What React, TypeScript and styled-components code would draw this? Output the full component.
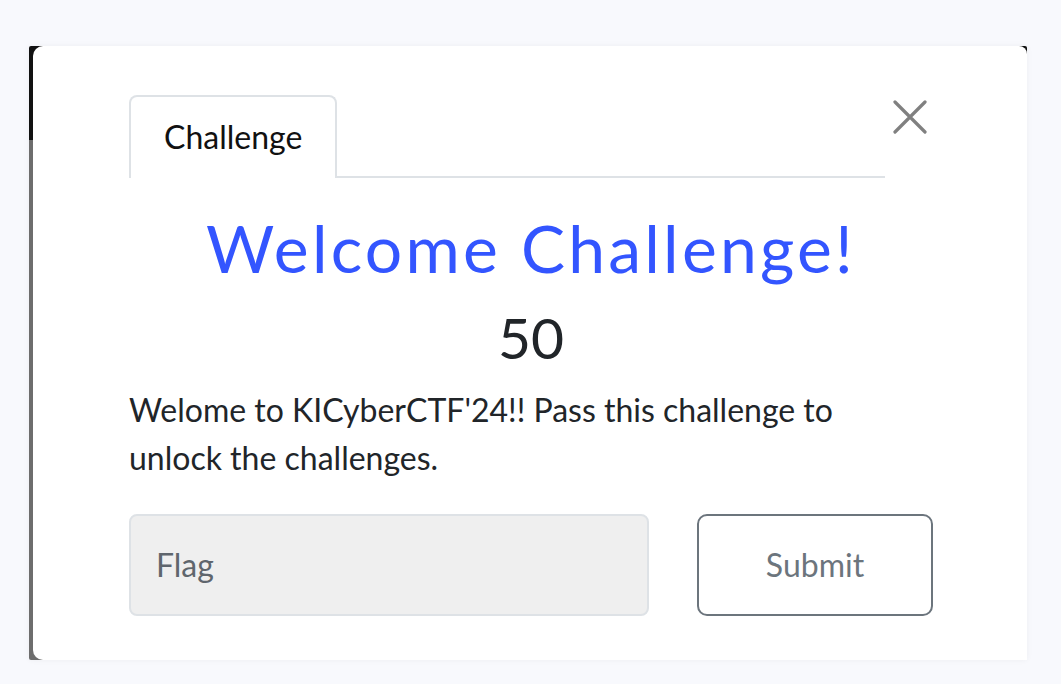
import React from "react";
import styled, { createGlobalStyle } from "styled-components";

const Global = createGlobalStyle`
  html, body { margin: 0; padding: 0; background: #f8f9fd; }
  body { font-family: Lato, "Open Sans", sans-serif; color: #212529; }
  * { box-sizing: border-box; }
`;

const Page = styled.div`
  padding: 46px 34px 24px 29px;
`;

const Backdrop = styled.div`
  background: linear-gradient(#111 0, #111 94px, #6d6d6d 94px, #6d6d6d 100%);
  border-radius: 2px;
  box-shadow: 0 0 6px rgba(0, 0, 0, 0.05);
  padding-left: 4px;
`;

const Card = styled.div`
  background: #fff;
  border-radius: 10px 8px 0 10px;
  padding: 49px 94px 44px 96px;
  display: flex;
  flex-direction: column;
`;

const Header = styled.div`
  display: flex;
  align-items: flex-start;
  gap: 8px;
`;

const Tabs = styled.div`
  flex: 1;
  display: flex;
  border-bottom: 2px solid #dee2e6;
`;

const Tab = styled.div`
  border: 2px solid #dee2e6;
  border-bottom: none;
  border-radius: 8px 8px 0 0;
  padding: 18px 33px 22px 33px;
  font-size: 32px;
  line-height: 1.4;
  color: #111;
  margin-bottom: -2px;
  background: #fff;
  height: 83px;
`;

const Close = styled.button`
  border: none;
  background: none;
  padding: 0;
  width: 40px;
  height: 40px;
  margin-top: 2px;
  display: flex;
  align-items: center;
  justify-content: flex-start;
  cursor: pointer;
`;

const Title = styled.h1`
  margin: 30px 0 0;
  text-align: center;
  font-weight: 400;
  font-size: 66px;
  line-height: 1.2;
  letter-spacing: 3.2px;
  color: #3355ff;
`;

const Points = styled.div`
  text-align: center;
  font-size: 57px;
  line-height: 1.2;
  color: #212529;
  margin-top: 16px;
`;

const Desc = styled.p`
  margin: 14px 0 0;
  font-size: 32px;
  line-height: 48px;
  color: #212529;
`;

const FormRow = styled.form`
  display: flex;
  gap: 48px;
  margin-top: 32px;
`;

const Input = styled.input`
  flex: 0 0 520px;
  height: 102px;
  background: #efefef;
  border: 2px solid #dee2e6;
  border-radius: 8px;
  padding: 0 25px;
  font-family: Lato, sans-serif;
  font-size: 32px;
  color: #495057;
  &::placeholder { color: #5f666d; }
  outline: none;
`;

const Submit = styled.button`
  flex: 1;
  height: 102px;
  background: #fff;
  border: 2px solid #6c757d;
  border-radius: 10px;
  font-family: Lato, sans-serif;
  font-size: 32px;
  color: #6c757d;
  cursor: pointer;
`;

export default function App() {
  return (
    <>
      <Global />
      <Page>
        <Backdrop>
          <Card>
            <Header>
              <Tabs>
                <Tab>Challenge</Tab>
              </Tabs>
              <Close aria-label="Close">
                <svg width="34" height="34" viewBox="0 0 34 34">
                  <path d="M2 2 L32 32 M32 2 L2 32" stroke="#808080" strokeWidth="3.2" strokeLinecap="round" />
                </svg>
              </Close>
            </Header>
            <Title>Welcome Challenge!</Title>
            <Points>50</Points>
            <Desc>Welome to KICyberCTF'24!! Pass this challenge to unlock the challenges.</Desc>
            <FormRow onSubmit={(e) => e.preventDefault()}>
              <Input placeholder="Flag" />
              <Submit type="submit">Submit</Submit>
            </FormRow>
          </Card>
        </Backdrop>
      </Page>
    </>
  );
}
